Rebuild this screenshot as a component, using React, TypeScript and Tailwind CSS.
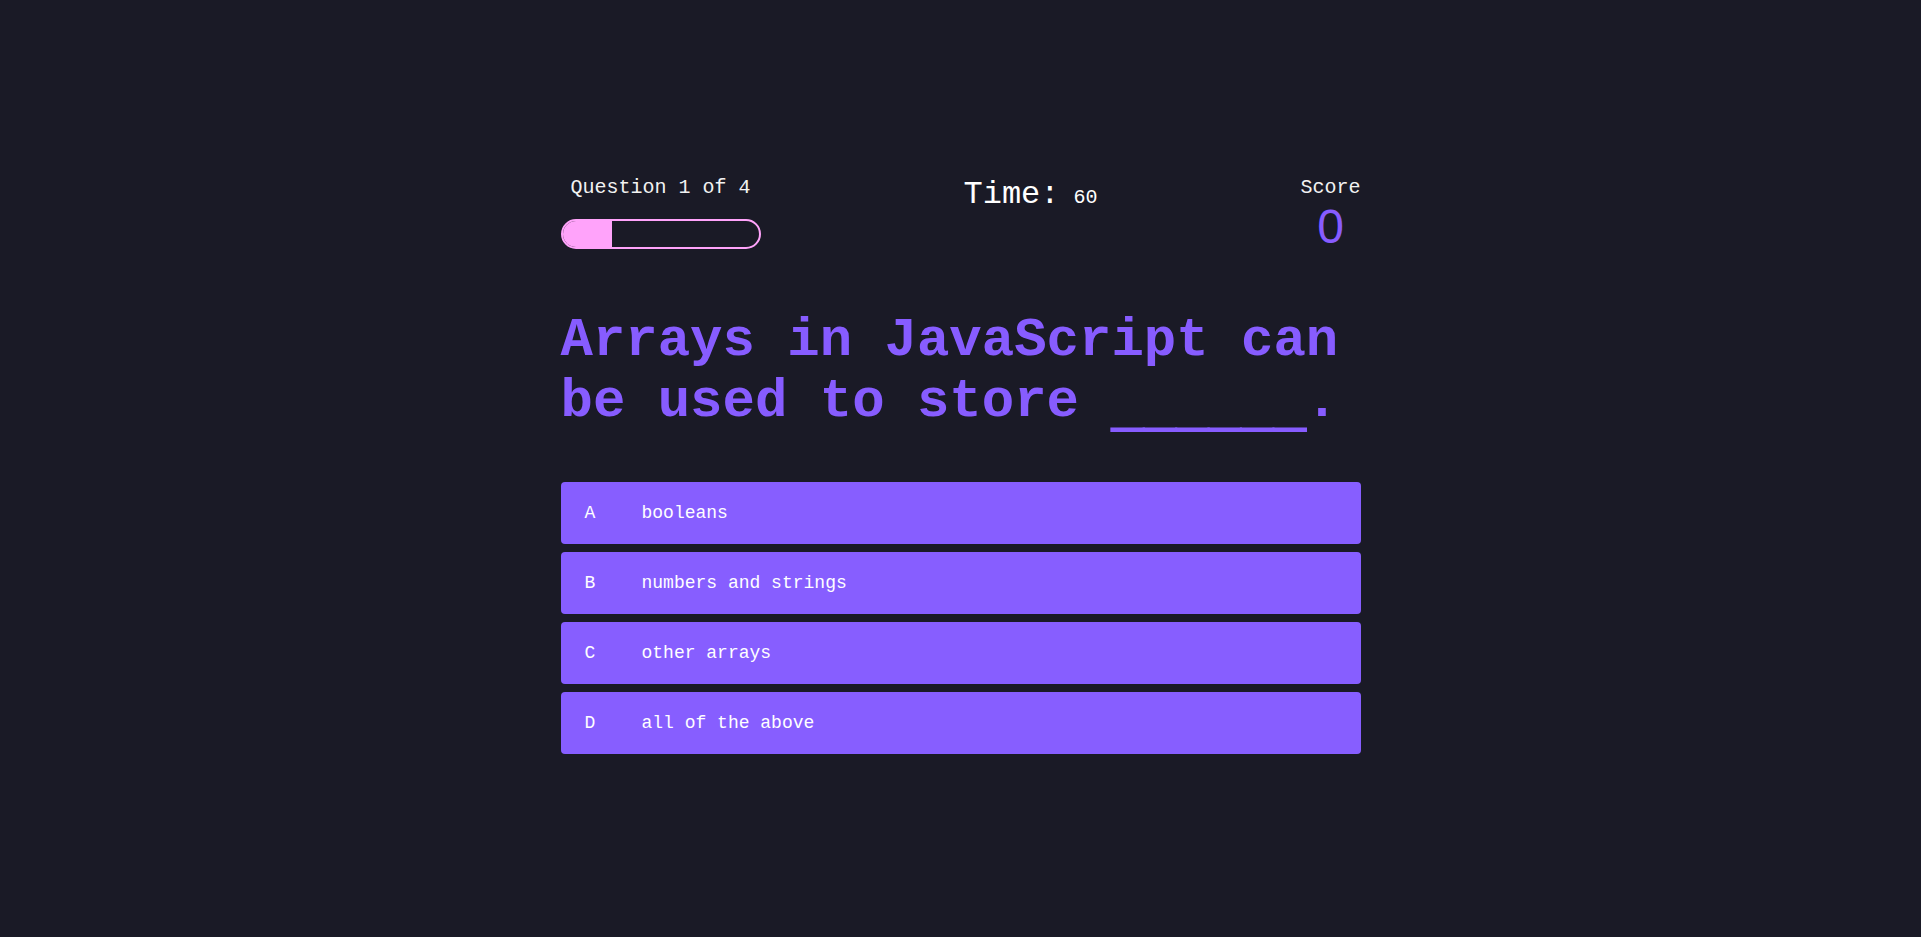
const options = [
  { letter: "A", text: "booleans" },
  { letter: "B", text: "numbers and strings" },
  { letter: "C", text: "other arrays" },
  { letter: "D", text: "all of the above" },
];

export default function App() {
  const current = 1;
  const total = 4;

  return (
    <div className="min-h-screen bg-[#1a1a26] flex items-center justify-center leading-[normal] font-['Liberation_Mono','Courier_New',monospace]">
      <div className="w-[800px]">
        {/* Top bar: progress, timer, score */}
        <div className="flex justify-between items-start">
          <div className="w-[200px] flex flex-col items-center">
            <p className="text-[20px] text-[#f2f2f2]">
              Question {current} of {total}
            </p>
            <div className="mt-5 w-[200px] h-[30px] rounded-full border-2 border-[#ffa3fa] overflow-hidden">
              <div className="h-full bg-[#ffa3fa]" style={{ width: `${(current / total) * 100}%` }} />
            </div>
          </div>

          <div className="flex items-baseline gap-[14px] text-white">
            <span className="text-[32px]">Time:</span>
            <span className="text-[20px]">60</span>
          </div>

          <div className="flex flex-col items-center">
            <p className="text-[20px] text-[#f2f2f2]">Score</p>
            <p className="text-[48px] text-[#875cff] font-['Liberation_Sans',Arial,sans-serif]">0</p>
          </div>
        </div>

        {/* Question */}
        <h1 className="mt-14 text-[54px] font-bold text-[#875cff]">
          Arrays in JavaScript can be used to store{" "}
          <span className="inline-block translate-y-[9px] [-webkit-text-stroke:2px_#875cff]">______</span>.
        </h1>

        {/* Answers */}
        <div className="mt-[50px]">
          {options.map((o) => (
            <button
              key={o.letter}
              className="mb-2 w-full h-[62px] flex items-center pl-6 rounded bg-[#875eff] text-white text-[18px] text-left"
            >
              <span className="w-[57px] shrink-0">{o.letter}</span>
              <span>{o.text}</span>
            </button>
          ))}
        </div>
      </div>
    </div>
  );
}
